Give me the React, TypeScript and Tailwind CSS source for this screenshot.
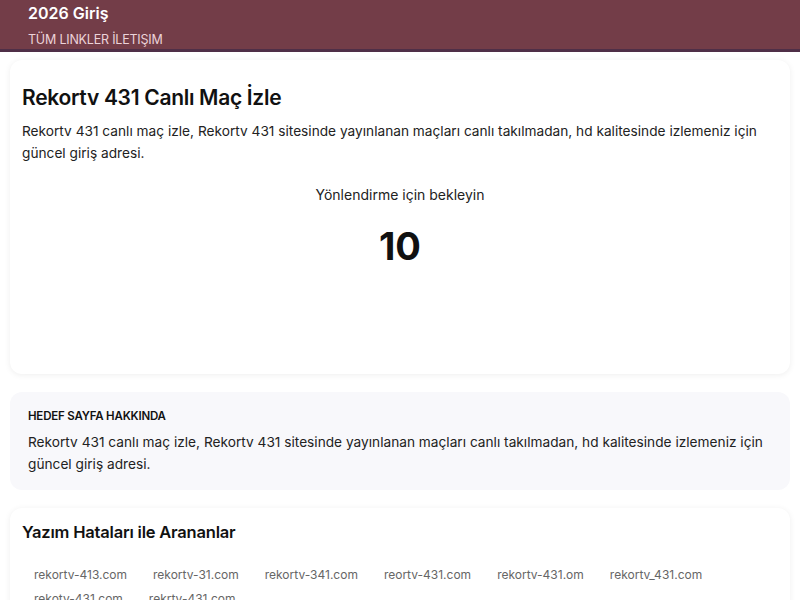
import React from "react";

const links = [
  "rekortv-413.com",
  "rekortv-31.com",
  "rekortv-341.com",
  "reortv-431.com",
  "rekortv-431.om",
  "rekortv_431.com",
  "rekotv-431.com",
  "rekrtv-431.com",
];

export default function App() {
  const desc =
    "Rekortv 431 canlı maç izle, Rekortv 431 sitesinde yayınlanan maçları canlı takılmadan, hd kalitesinde izlemeniz için güncel giriş adresi.";
  return (
    <div
      className="min-h-screen bg-white text-[#111]"
      style={{ fontFamily: "Inter, 'Noto Sans', sans-serif" }}
    >
      <header className="bg-[#733d48] border-b-[3px] border-[#4f2f47] h-[52px] px-[28px] flex flex-col">
        <div className="text-white font-semibold text-[16px] leading-[26px] mt-0">2026 Giriş</div>
        <nav className="text-[#ecd3d9] text-[12.5px] leading-[26px] tracking-[-0.2px] mt-[1px]">
          TÜM LINKLER İLETIŞIM
        </nav>
      </header>

      <main className="px-[10px] pt-[8px] flex flex-col gap-[18px]">
        <section className="rounded-[12px] bg-white shadow-[0_1px_6px_rgba(0,0,0,0.07)] px-[12px] pt-[24px] pb-[40px] h-[314px]">
          <h1 className="text-[21px] font-semibold leading-[28px] tracking-[-0.3px]">
            Rekortv 431 Canlı Maç İzle
          </h1>
          <p className="mt-[8px] text-[13.7px] leading-[22px] text-[#222]">{desc}</p>
          <div className="mt-[20px] text-center text-[14px] leading-[22px] text-[#222]">
            Yönlendirme için bekleyin
          </div>
          <div className="mt-[17px] text-center text-[38px] font-bold leading-[46px]">10</div>
        </section>

        <section className="rounded-[12px] bg-[#f8f8fb] px-[18px] pt-[15px] pb-[15px]">
          <h2 className="text-[11.5px] font-semibold leading-[18px] tracking-[-0.2px] text-[#111]">
            HEDEF SAYFA HAKKINDA
          </h2>
          <p className="mt-[6px] text-[13.7px] leading-[22px] text-[#222]">{desc}</p>
        </section>

        <section className="rounded-[12px] bg-white shadow-[0_1px_6px_rgba(0,0,0,0.07)] px-[12px] pt-[13px] pb-[20px]">
          <h2 className="text-[16.5px] font-semibold leading-[22px] tracking-[-0.2px]">
            Yazım Hataları ile Arananlar
          </h2>
          <div className="mt-[23px] flex flex-wrap gap-x-[26px] gap-y-[6px] px-[12px]">
            {links.map((l) => (
              <span key={l} className="text-[12px] leading-[18px] text-[#666]">
                {l}
              </span>
            ))}
          </div>
        </section>
      </main>
    </div>
  );
}
